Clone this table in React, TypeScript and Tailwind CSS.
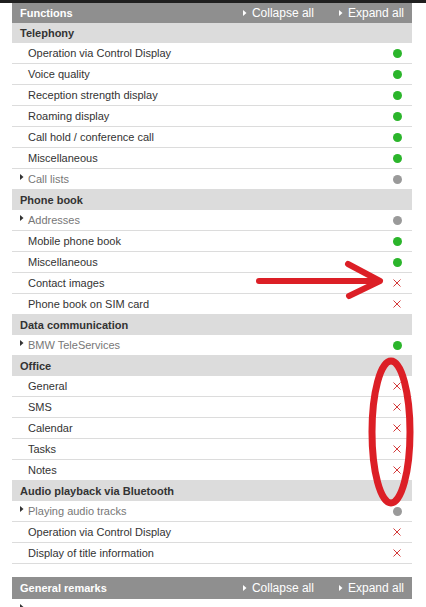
import React from 'react';

type Status = 'ok' | 'na' | 'no';

type Item = { label: string; status: Status; more?: boolean };

type Section = { title: string; items: Item[] };

const sections: Section[] = [
  {
    title: 'Telephony',
    items: [
      { label: 'Operation via Control Display', status: 'ok' },
      { label: 'Voice quality', status: 'ok' },
      { label: 'Reception strength display', status: 'ok' },
      { label: 'Roaming display', status: 'ok' },
      { label: 'Call hold / conference call', status: 'ok' },
      { label: 'Miscellaneous', status: 'ok' },
      { label: 'Call lists', status: 'na', more: true },
    ],
  },
  {
    title: 'Phone book',
    items: [
      { label: 'Addresses', status: 'na', more: true },
      { label: 'Mobile phone book', status: 'ok' },
      { label: 'Miscellaneous', status: 'ok' },
      { label: 'Contact images', status: 'no' },
      { label: 'Phone book on SIM card', status: 'no' },
    ],
  },
  {
    title: 'Data communication',
    items: [{ label: 'BMW TeleServices', status: 'ok', more: true }],
  },
  {
    title: 'Office',
    items: [
      { label: 'General', status: 'no' },
      { label: 'SMS', status: 'no' },
      { label: 'Calendar', status: 'no' },
      { label: 'Tasks', status: 'no' },
      { label: 'Notes', status: 'no' },
    ],
  },
  {
    title: 'Audio playback via Bluetooth',
    items: [
      { label: 'Playing audio tracks', status: 'na', more: true },
      { label: 'Operation via Control Display', status: 'no' },
      { label: 'Display of title information', status: 'no' },
    ],
  },
];

function Arrow({ white }: { white?: boolean }) {
  return (
    <svg width="4" height="6" viewBox="0 0 4 6" className="shrink-0">
      <path d="M0 0 L3.5 3 L0 6 Z" fill={white ? '#ffffff' : '#333333'} />
    </svg>
  );
}

function StatusIcon({ status }: { status: Status }) {
  if (status === 'no') {
    return (
      <svg width="8" height="8" viewBox="0 0 8 8">
        <path d="M0.5 0.5 L7.5 7.5 M7.5 0.5 L0.5 7.5" stroke="#d43a3a" strokeWidth="1" />
      </svg>
    );
  }
  return (
    <span
      className={
        status === 'ok'
          ? 'block h-[9px] w-[9px] rounded-full bg-[#2bb52b]'
          : 'block h-[9px] w-[9px] rounded-full bg-[#9a9a9a]'
      }
    />
  );
}

function BarHeader({ title, tall }: { title: string; tall?: boolean }) {
  return (
    <div
      className={
        tall
          ? 'flex h-[22px] items-center bg-[#8f8f8f] px-2 text-white'
          : 'flex h-[20px] items-center bg-[#8f8f8f] px-2 text-white'
      }
    >
      <span className="text-[11px] font-bold">{title}</span>
      <div className="ml-auto flex items-center text-[12px]">
        <Arrow white />
        <span className="ml-[5px]">Collapse all</span>
        <span className="ml-[25px]">
          <Arrow white />
        </span>
        <span className="ml-[5px]">Expand all</span>
      </div>
    </div>
  );
}

function Row({ item }: { item: Item }) {
  return (
    <div className="flex h-[21px] items-center border-b border-[#dcdcdc] text-[11px]">
      {item.more ? (
        <div className="flex w-[16px] shrink-0 self-start pl-2 pt-[5px]">
          <Arrow />
        </div>
      ) : (
        <div className="w-[16px] shrink-0" />
      )}
      <span className={item.more ? 'text-[#777777]' : 'text-[#333333]'}>{item.label}</span>
      <div className="ml-auto flex w-[30px] justify-center">
        <StatusIcon status={item.status} />
      </div>
    </div>
  );
}

export default function App() {
  return (
    <div className="relative h-[607px] w-[426px] overflow-hidden bg-white font-['Liberation_Sans',Arial,sans-serif]">
      <div className="h-[3px] bg-[#1f1f1f]" />
      <div className="ml-[12px] w-[400px]">
        <BarHeader title="Functions" />
        {sections.map((section) => (
          <div key={section.title}>
            <div className="flex h-[20px] items-center bg-[#dcdcdc] pl-2 text-[11px] font-bold text-[#333333]">
              {section.title}
            </div>
            {section.items.map((item, i) => (
              <Row key={i} item={item} />
            ))}
          </div>
        ))}
        <div className="mt-[13px]">
          <BarHeader title="General remarks" tall />
          <div className="flex h-[21px] pl-2 pt-[5px]">
            <Arrow />
          </div>
        </div>
      </div>

      <svg
        className="pointer-events-none absolute left-0 top-0"
        width="426"
        height="607"
        viewBox="0 0 426 607"
      >
        <g stroke="#dc1f26" strokeLinecap="round" strokeLinejoin="round" fill="none">
          <path d="M259 281 L378 281" strokeWidth="6" />
          <path d="M348 264 L380 281 L349 296" strokeWidth="6" />
          <ellipse cx="391" cy="432" rx="19" ry="71" strokeWidth="7" />
        </g>
      </svg>
    </div>
  );
}
